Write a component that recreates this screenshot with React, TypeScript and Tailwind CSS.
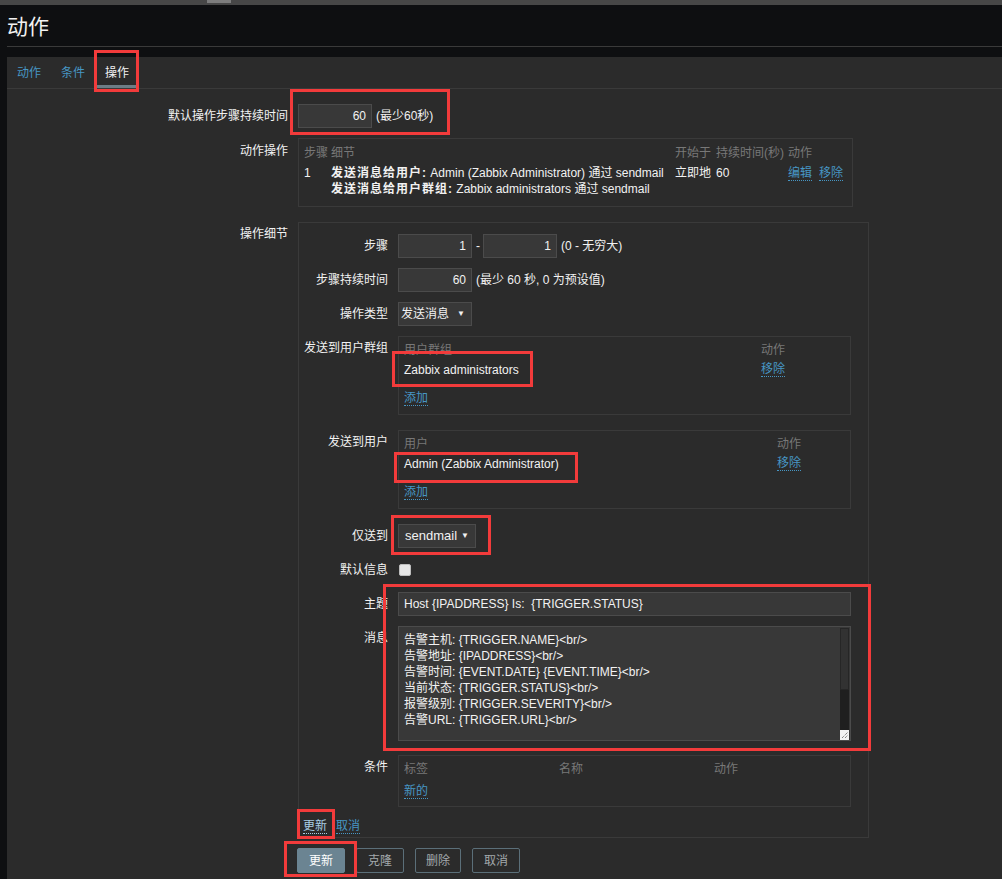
import React from 'react'

const Link = ({ children, className = '' }: { children: React.ReactNode; className?: string }) => (
  <span className={`text-[#4796c4] border-b border-dotted border-[#4796c4] leading-[14px] ${className}`}>{children}</span>
)

const Input = ({ value, w = 'w-[74px]' }: { value: string; w?: string }) => (
  <div className={`${w} h-[24px] bg-[#383838] border border-[#4b4b4b] flex items-center justify-end pr-[5px]`}>{value}</div>
)

const Select = ({ value, w, big }: { value: string; w: string; big?: boolean }) => (
  <div className={`${w} h-[24px] bg-[#383838] border border-[#4b4b4b] flex items-center justify-between pl-[2px] pr-[6px]`}>
    <span className={big ? 'text-[13px] pl-[4px]' : ''}>{value}</span>
    <span className="text-[8px]">▼</span>
  </div>
)

// 内层表单行
const Row = ({ label, children, className = '' }: { label: string; children: React.ReactNode; className?: string }) => (
  <div className={`flex items-start ${className}`}>
    <div className="w-[99px] pr-[10px] text-right leading-[24px] shrink-0">{label}</div>
    {children}
  </div>
)

const MSG = [
  '告警主机: {TRIGGER.NAME}<br/>',
  '告警地址: {IPADDRESS}<br/>',
  '告警时间: {EVENT.DATE} {EVENT.TIME}<br/>',
  '当前状态: {TRIGGER.STATUS}<br/>',
  '报警级别: {TRIGGER.SEVERITY}<br/>',
  '告警URL: {TRIGGER.URL}<br/>',
  '\u00a0',
  '{TRIGGER.DESCRIPTION}',
]

export default function App() {
  return (
    <div className="relative w-[1002px] h-[879px] overflow-hidden bg-[#0e0f11] text-[#f2f2f2] text-[12px] font-['Liberation_Sans','Noto_Sans_CJK_SC',sans-serif] flex flex-col">
      {/* 顶部条 */}
      <div className="h-[5px] bg-[#474747] pl-[207px] shrink-0">
        <div className="w-[24px] h-[3px] bg-[#7d7d7d]" />
      </div>

      {/* 标题 */}
      <div className="h-[41px] pl-[7px] pt-[2px] flex items-center text-[21px] shrink-0">动作</div>
      <div className="ml-[7px] h-px bg-[#3a3a3a] shrink-0" />
      <div className="h-[10px] shrink-0" />

      {/* 主面板 */}
      <div className="ml-[7px] flex-1 bg-[#2b2b2b]">
        {/* Tabs */}
        <div className="flex h-[32px] border-b border-[#3a3a3a]">
          {[
            { t: '动作', on: false },
            { t: '条件', on: false },
            { t: '操作', on: true },
          ].map(tab => (
            <div key={tab.t} className="w-[44px] flex flex-col">
              <div className={`flex-1 flex items-center justify-center pt-[4px] ${tab.on ? 'text-[#f2f2f2]' : 'text-[#4796c4]'}`}>{tab.t}</div>
              <div className={`h-[3px] ${tab.on ? 'bg-[#6c7d86]' : ''}`} />
            </div>
          ))}
        </div>

        {/* 默认操作步骤持续时间 */}
        <div className="flex items-center mt-[15px]">
          <div className="w-[291px] pr-[10px] text-right">默认操作步骤持续时间</div>
          <Input value="60" />
          <span className="ml-[4px]">(最少60秒)</span>
        </div>

        {/* 动作操作 */}
        <div className="flex items-start mt-[10px]">
          <div className="w-[291px] pr-[10px] text-right leading-[26px]">动作操作</div>
          <div className="w-[555px] h-[69px] border border-[#3a3a3a] px-[5px] pt-[6px] leading-[16px]">
            <div className="flex text-[#787878]">
              <div className="w-[27px]">步骤</div>
              <div className="w-[344px]">细节</div>
              <div className="w-[41px]">开始于</div>
              <div className="w-[72px]">持续时间(秒)</div>
              <div>动作</div>
            </div>
            <div className="flex items-start mt-[4px]">
              <div className="w-[27px]">1</div>
              <div className="w-[344px]">
                <div><b className="tracking-[1px]">发送消息给用户:</b> Admin (Zabbix Administrator) 通过 sendmail</div>
                <div><b className="tracking-[1px]">发送消息给用户群组:</b> Zabbix administrators 通过 sendmail</div>
              </div>
              <div className="w-[41px]">立即地</div>
              <div className="w-[72px]">60</div>
              <div className="flex items-start gap-[7px] pt-px"><Link>编辑</Link><Link>移除</Link></div>
            </div>
          </div>
        </div>

        {/* 操作细节 */}
        <div className="flex items-start mt-[15px]">
          <div className="w-[291px] pr-[10px] text-right leading-[24px]">操作细节</div>
          <div className="w-[571px] h-[616px] border border-[#3a3a3a] pt-[11px]">
            <Row label="步骤">
              <div className="flex items-center">
                <Input value="1" />
                <span className="ml-[4px] mr-[3px]">-</span>
                <Input value="1" />
                <span className="ml-[4px]">(0 - 无穷大)</span>
              </div>
            </Row>
            <Row label="步骤持续时间" className="mt-[10px]">
              <div className="flex items-center">
                <Input value="60" />
                <span className="ml-[4px]">(最少 60 秒, 0 为预设值)</span>
              </div>
            </Row>
            <Row label="操作类型" className="mt-[10px]">
              <Select value="发送消息" w="w-[74px]" />
            </Row>
            <Row label="发送到用户群组" className="mt-[10px]">
              <div className="w-[453px] h-[79px] border border-[#3a3a3a] px-[5px] pt-[5px] leading-[16px]">
                <div className="flex text-[#787878]">
                  <div className="w-[357px]">用户群组</div>
                  <div>动作</div>
                </div>
                <div className="flex items-start mt-[4px]">
                  <div className="w-[357px]">Zabbix administrators</div>
                  <Link>移除</Link>
                </div>
                <div className="mt-[12px]"><Link>添加</Link></div>
              </div>
            </Row>
            <Row label="发送到用户" className="mt-[15px]">
              <div className="w-[453px] h-[79px] border border-[#3a3a3a] px-[5px] pt-[5px] leading-[16px]">
                <div className="flex text-[#787878]">
                  <div className="w-[373px]">用户</div>
                  <div>动作</div>
                </div>
                <div className="flex items-start mt-[4px]">
                  <div className="w-[373px]">Admin (Zabbix Administrator)</div>
                  <Link>移除</Link>
                </div>
                <div className="mt-[12px]"><Link>添加</Link></div>
              </div>
            </Row>
            <Row label="仅送到" className="mt-[15px]">
              <Select value="sendmail" w="w-[78px]" big />
            </Row>
            <Row label="默认信息" className="mt-[10px]">
              <div className="h-[24px] flex items-center pl-px">
                <div className="w-[12px] h-[12px] rounded-[2px] bg-[#e6e6e6] border border-[#bdbdbd]" />
              </div>
            </Row>
            <Row label="主题" className="mt-[10px]">
              <div className="w-[453px] h-[24px] bg-[#383838] border border-[#4b4b4b] flex items-center pl-[5px]">
                Host {'{IPADDRESS}'} Is:&nbsp; {'{TRIGGER.STATUS}'}
              </div>
            </Row>
            <Row label="消息" className="mt-[10px]">
              <div className="w-[453px] h-[115px] bg-[#383838] border border-[#4b4b4b] flex overflow-hidden">
                <div className="flex-1 pl-[5px] pt-[5px] leading-[16px] overflow-hidden whitespace-pre">
                  {MSG.map((l, i) => <div key={i}>{l}</div>)}
                </div>
                <div className="w-[10px] flex flex-col pt-px pr-px">
                  <div className="h-[62px] bg-[#323232] border border-[#262626]" />
                  <div className="flex-1 bg-[#1f1f1f]" />
                  <div className="h-[10px] bg-[#f2f2f2] flex items-center justify-center">
                    <svg width="8" height="8" viewBox="0 0 8 8">
                      <path d="M1 7 L7 1 M4 7 L7 4" stroke="#555" strokeWidth="1" strokeDasharray="1 1" />
                    </svg>
                  </div>
                </div>
              </div>
            </Row>
            <Row label="条件" className="mt-[14px]">
              <div className="w-[453px] h-[52px] border border-[#3a3a3a] px-[5px] pt-[5px] leading-[16px]">
                <div className="flex text-[#787878]">
                  <div className="w-[155px]">标签</div>
                  <div className="w-[155px]">名称</div>
                  <div>动作</div>
                </div>
                <div className="mt-[6px]"><Link>新的</Link></div>
              </div>
            </Row>
            <div className="mt-[12px] pl-[4px] leading-[16px] flex items-start gap-[9px]">
              <Link className="text-[#a8cde4] border-[#a8cde4]">更新</Link>
              <Link>取消</Link>
            </div>
          </div>
        </div>

        {/* 底部按钮 */}
        <div className="flex mt-[10px] pl-[290px] gap-[11px]">
          <button className="h-[25px] px-[11px] bg-[#6b8492] border border-[#6b8492] text-white rounded-[2px]">更新</button>
          <button className="h-[25px] px-[11px] border border-[#5b6f79] text-[#a3a9ac] rounded-[2px]">克隆</button>
          <button className="h-[25px] px-[10px] border border-[#5b6f79] text-[#a3a9ac] rounded-[2px]">删除</button>
          <button className="h-[25px] px-[11px] border border-[#5b6f79] text-[#a3a9ac] rounded-[2px]">取消</button>
        </div>
      </div>

      {/* 红色标注框 */}
      <div className="absolute left-[94px] top-[50px] w-[45px] h-[42px] border-[3px] border-[#f23b3b]" />
      <div className="absolute left-[290px] top-[89px] w-[160px] h-[46px] border-[3px] border-[#f23b3b]" />
      <div className="absolute left-[392px] top-[351px] w-[141px] h-[36px] border-[3px] border-[#f23b3b]" />
      <div className="absolute left-[394px] top-[452px] w-[184px] h-[31px] border-[3px] border-[#f23b3b]" />
      <div className="absolute left-[391px] top-[515px] w-[100px] h-[40px] border-[3px] border-[#f23b3b]" />
      <div className="absolute left-[383px] top-[584px] w-[488px] h-[167px] border-[3px] border-[#f23b3b]" />
      <div className="absolute left-[297px] top-[809px] w-[38px] h-[30px] border-[3px] border-[#f23b3b]" />
      <div className="absolute left-[284px] top-[841px] w-[73px] h-[36px] border-[3px] border-[#f23b3b]" />
    </div>
  )
}
